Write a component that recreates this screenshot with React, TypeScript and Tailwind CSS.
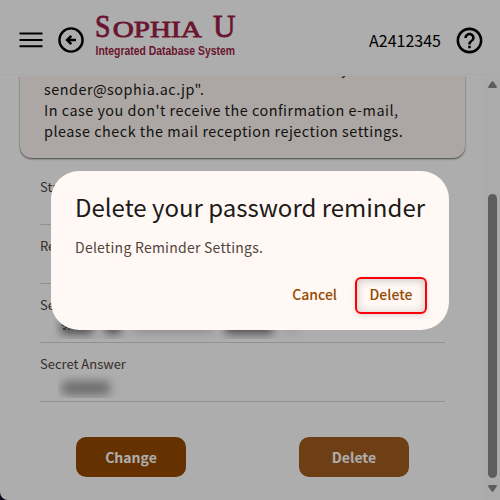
import { useState } from 'react';

function MenuIcon() {
  return (
    <svg className="w-6 h-6 shrink-0" viewBox="0 0 24 24" fill="currentColor">
      <path d="M.5 4.500h23v2H.5zM.5 11h23v2H.5zM.5 17.300h23v2H.5z" />
    </svg>
  );
}

function BackIcon() {
  return (
    <svg className="w-[26px] h-[26px] shrink-0" viewBox="0 0 26 26" fill="none" stroke="currentColor" strokeWidth="2.4">
      <circle cx="13" cy="13" r="11.600" />
      <path d="M18 13H9.800M13.300 8.800L9.100 13l4.200 4.200" strokeWidth="2.500" />
    </svg>
  );
}

function HelpIcon() {
  return (
    <svg className="w-[31px] h-[31px] shrink-0" viewBox="0 0 24 24" fill="currentColor">
      <path d="M11 18h2v-2h-2v2zm1-16C6.480 2 2 6.480 2 12s4.480 10 10 10 10-4.480 10-10S17.520 2 12 2zm0 18c-4.410 0-8-3.590-8-8s3.590-8 8-8 8 3.590 8 8-3.590 8-8 8zm0-14c-2.210 0-4 1.790-4 4h2c0-1.100.9-2 2-2s2 .9 2 2c0 2-3 1.750-3 5h2c0-2.250 3-2.500 3-5 0-2.210-1.790-4-4-4z" />
    </svg>
  );
}

function Logo() {
  return (
    <svg className="w-[142px] h-[48px] shrink-0 overflow-visible" viewBox="0 0 142 48" fill="#9d1f48">
      <g fontFamily="'Liberation Serif', serif" stroke="#9d1f48" strokeWidth="0.8">
        <text x="0" y="25" fontSize="31" textLength="15.500" lengthAdjust="spacingAndGlyphs">S</text>
        <text x="17.800" y="25" fontSize="24" textLength="89" lengthAdjust="spacingAndGlyphs">OPHIA</text>
        <text x="118" y="25" fontSize="31" textLength="22.500" lengthAdjust="spacingAndGlyphs">U</text>
      </g>
      <text x="0.500" y="43" fontFamily="'Liberation Sans', sans-serif" fontWeight="700" fontSize="12.300" textLength="139.500" lengthAdjust="spacingAndGlyphs">
        Integrated Database System
      </text>
    </svg>
  );
}

const fields = [
  { label: 'Status', value: '' },
  { label: 'Reminder', value: '' },
  { label: 'Secret Question', value: 'question' },
  { label: 'Secret Answer', value: 'answer' },
];

function MaskedValue({ value }: { value: string }) {
  if (value === 'question') {
    return (
      <div className="flex h-6 ml-[13px] overflow-hidden">
        <svg className="w-3 h-3 mt-[5px] ml-[8px] -mr-[20px] shrink-0 text-neutral-800" viewBox="0 0 12 12" fill="currentColor">
          <path d="M1 4h3v2H1zM4 6h3v2H4zM2 8h3v2H2zM7 8h2v2H7z" />
        </svg>
        <div className="flex items-center gap-3 h-6 ml-2 blur-[5px]">
          <div className="w-8 h-3.5 bg-neutral-500" />
          <div className="w-4 h-3.5 bg-neutral-500" />
          <div className="w-20 h-3 bg-neutral-300" />
          <div className="w-12 h-3.5 bg-neutral-500" />
          <div className="w-3 h-3 bg-neutral-200" />
        </div>
      </div>
    );
  }
  if (value === 'answer') {
    return (
      <div className="flex items-center h-6 ml-[18px] pl-[3px] overflow-hidden">
        <div className="w-[50px] h-3.5 mt-1 rounded-full bg-neutral-400 blur-[5px]" />
      </div>
    );
  }
  return null;
}

export default function App() {
  const [open, setOpen] = useState(true);

  return (
    <div className="relative w-[500px] h-[500px] overflow-hidden bg-[#150a30] font-['Noto_Sans_CJK_JP',sans-serif]">
      <div className="flex flex-col h-full bg-white rounded-bl-lg overflow-hidden">
        {/* Header */}
        <header className="flex items-center h-[74px] shrink-0 pl-[19px] pr-[15px] pt-[6px] text-black">
          <MenuIcon />
          <div className="ml-[14.500px]">
            <BackIcon />
          </div>
          <div className="ml-[11.500px] -mt-[8px]">
            <Logo />
          </div>
          <span className="ml-auto mr-[13px] text-[16px] leading-6">A2412345</span>
          <HelpIcon />
        </header>
        <div className="h-[2px] shrink-0 border-t border-[#f8f8f8]" />

        <div className="flex flex-1 min-h-0">
          {/* Scrolled page */}
          <main className="flex-1 h-full overflow-hidden px-5">
            <div className="h-[82px] flex flex-col justify-end overflow-hidden rounded-b-xl bg-[#fef6f2] shadow-[0_1px_2px_rgba(0,0,0,0.6)] pl-6 pb-[17px] text-[14.4px] leading-[21px] tracking-[0.5px] text-[#201a17]">
              <p className="pl-[297px]">y</p>
              <p>sender@sophia.ac.jp".</p>
              <p>In case you don't receive the confirmation e-mail,</p>
              <p>please check the mail reception rejection settings.</p>
            </div>

            <div className="mt-[8px] px-5">
              {fields.map((field) => (
                <div key={field.label} className="h-[59px] pt-[11px] border-b border-[#dcd4d0]">
                  <div className="text-[13px] leading-5 text-[#51443c]">{field.label}</div>
                  <MaskedValue value={field.value} />
                </div>
              ))}
            </div>

            <div className="flex justify-between mt-[35px] px-14">
              <button className="w-[110px] h-10 rounded-[10px] bg-[#964900] text-white text-[14px] font-bold">Change</button>
              <button className="w-[110px] h-10 rounded-[10px] bg-[#a35d1f] text-white text-[14px] font-bold">Delete</button>
            </div>
          </main>

          {/* Scrollbar */}
          <div className="flex flex-col items-center w-[15px] shrink-0 bg-[#fcfcfc] text-[#8a8a8a]">
            <svg className="w-[9px] h-[7px] mt-[5px]" viewBox="0 0 9 7" fill="currentColor">
              <path d="M3.500 .8q1-1.300 2 0L8.800 5.500q.4 1.500-1 1.500H1.200Q-.2 7 .2 5.500z" />
            </svg>
            <div className="w-[9px] h-[284px] mt-[106px] rounded-full bg-[#8a8a8a]" />
            <svg className="w-[9px] h-[7px] mt-[7px]" viewBox="0 0 9 7" fill="currentColor">
              <path d="M3.500 6.200q1 1.300 2 0L8.800 1.500Q9.200 0 7.800 0H1.200Q-.2 0 .2 1.500z" />
            </svg>
          </div>
        </div>
      </div>

      {/* Confirm dialog */}
      {open && (
        <div className="absolute inset-0 flex justify-center items-start pt-[171px] bg-black/32">
          <div className="w-[398px] h-[159px] rounded-[28px] bg-[#fff8f5] px-6 pt-[19px]">
            <h2 className="text-[24px] leading-[34px] whitespace-nowrap text-[#201a17]">Delete your password reminder</h2>
            <p className="mt-[13px] text-[14px] leading-5 tracking-[0.25px] text-[#51443c]">Deleting Reminder Settings.</p>
            <div className="flex justify-end items-center mt-[20px] -mr-[2px] text-[14px] font-medium text-[#964900]">
              <button className="mr-[18px] pb-[2px]" onClick={() => setOpen(false)}>Cancel</button>
              <button
                className="w-[72px] h-[37px] pb-[2px] rounded-[6px] border-2 border-[#fb0007] shadow-[0_2px_5px_rgba(0,0,0,0.12),inset_0_1px_8px_rgba(0,0,0,0.22)]"
                onClick={() => setOpen(false)}
              >
                Delete
              </button>
            </div>
          </div>
        </div>
      )}
    </div>
  );
}
